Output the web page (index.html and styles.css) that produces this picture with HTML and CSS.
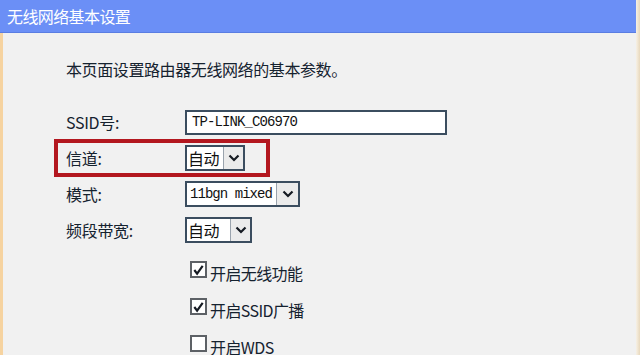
FILE: index.html
```html
<!DOCTYPE html>
<html lang="zh-CN">
<head>
<meta charset="utf-8">
<title>无线网络基本设置</title>
<link rel="stylesheet" href="styles.css">
</head>
<body>
<div class="page">
  <div class="main">
    <div class="header">无线网络基本设置</div>
    <div class="content">
      <p class="intro">本页面设置路由器无线网络的基本参数。</p>
      <div class="form">
        <div class="row">
          <span class="label">SSID号:</span>
          <div class="input">TP-LINK_C06970</div>
        </div>
        <div class="row">
          <span class="mark"></span>
          <span class="label">信道:</span>
          <div class="select s-channel">
            <span class="val">自动</span>
            <span class="btn"><svg width="12" height="8" viewBox="0 0 12 8"><polyline points="1.5,1.5 6,6 10.5,1.5" fill="none" stroke="#151a22" stroke-width="2.2"/></svg></span>
          </div>
        </div>
        <div class="row">
          <span class="label">模式:</span>
          <div class="select s-mode">
            <span class="val mono">11bgn mixed</span>
            <span class="btn"><svg width="12" height="8" viewBox="0 0 12 8"><polyline points="1.5,1.5 6,6 10.5,1.5" fill="none" stroke="#151a22" stroke-width="2.2"/></svg></span>
          </div>
        </div>
        <div class="row">
          <span class="label">频段带宽:</span>
          <div class="select s-band">
            <span class="val">自动</span>
            <span class="btn"><svg width="12" height="8" viewBox="0 0 12 8"><polyline points="1.5,1.5 6,6 10.5,1.5" fill="none" stroke="#151a22" stroke-width="2.2"/></svg></span>
          </div>
        </div>
      </div>
      <div class="checks">
        <div class="check">
          <span class="box"><svg width="14" height="14" viewBox="0 0 14 14"><polyline points="2.5,7 5.5,11 11.5,2.5" fill="none" stroke="#151a22" stroke-width="2.3"/></svg></span>
          <span class="ctext">开启无线功能</span>
        </div>
        <div class="check">
          <span class="box"><svg width="14" height="14" viewBox="0 0 14 14"><polyline points="2.5,7 5.5,11 11.5,2.5" fill="none" stroke="#151a22" stroke-width="2.3"/></svg></span>
          <span class="ctext">开启SSID广播</span>
        </div>
        <div class="check">
          <span class="box"></span>
          <span class="ctext">开启WDS</span>
        </div>
      </div>
    </div>
  </div>
  <div class="edge"></div>
</div>
</body>
</html>
```
FILE: styles.css
```css
* { box-sizing: border-box; }
body {
  margin: 0;
  background: #f1f1f1;
  font-family: "Noto Sans CJK SC", "Liberation Sans", sans-serif;
  color: #15222f;
}
.page {
  display: flex;
  height: 355px;
  overflow: hidden;
}
.main {
  width: 636px;
  display: flex;
  flex-direction: column;
}
.edge {
  width: 4px;
  background: linear-gradient(90deg, #f7f1e6, #e8d8bc);
}
.header {
  height: 34px;
  background: #6b8ff6;
  border-bottom: 1px solid #5a7de2;
  color: #fff;
  font-size: 16px;
  letter-spacing: -0.6px;
  line-height: 32px;
  padding-left: 7px;
}
.content {
  flex: 1;
  border-left: 3px solid #f6d3a0;
  padding-left: 63px;
}
.intro {
  margin: 26px 0 0;
  font-size: 16px;
  letter-spacing: -0.4px;
  line-height: 20px;
}
.form {
  margin-top: 25px;
}
.row {
  position: relative;
  height: 36px;
  display: flex;
  align-items: center;
}
.label {
  width: 119px;
  font-size: 16px;
  letter-spacing: -0.3px;
  line-height: 20px;
}
.mark {
  position: absolute;
  left: -12px;
  top: -1px;
  width: 216px;
  height: 38px;
  border: 4px solid #b3171f;
}
.input {
  width: 262px;
  height: 25px;
  border: 2px solid #3b4d5f;
  background: #fff;
  font-family: "Liberation Mono", monospace;
  font-size: 14px;
  letter-spacing: -0.9px;
  line-height: 21px;
  padding-left: 5px;
  color: #111;
}
.select {
  display: flex;
  height: 26px;
  border: 2px solid #3b4d5f;
  background: #fff;
  color: #111;
}
.val {
  font-size: 16px;
  letter-spacing: -0.6px;
  line-height: 22px;
  padding-left: 1px;
}
.val.mono {
  font-family: "Liberation Mono", monospace;
  font-size: 14px;
  letter-spacing: -0.95px;
  padding-left: 3px;
}
.btn {
  display: flex;
  align-items: center;
  justify-content: center;
  background: #ebebeb;
  border-left: 1px solid #9aa3ad;
}
.s-channel .val { width: 36px; }
.s-channel .btn { width: 20px; }
.s-mode .val { width: 89px; }
.s-mode .btn { width: 22px; }
.s-band .val { width: 43px; }
.s-band .btn { width: 20px; }
.checks {
  margin-top: 3px;
  margin-left: 124px;
}
.check {
  height: 37px;
  display: flex;
  align-items: center;
  gap: 3px;
}
.box {
  width: 17px;
  height: 17px;
  border: 2px solid #5d6166;
  background: #fff;
  display: flex;
  align-items: center;
  justify-content: center;
}
.ctext {
  font-size: 16px;
  letter-spacing: -0.6px;
  line-height: 20px;
  margin-top: 6px;
}
```
